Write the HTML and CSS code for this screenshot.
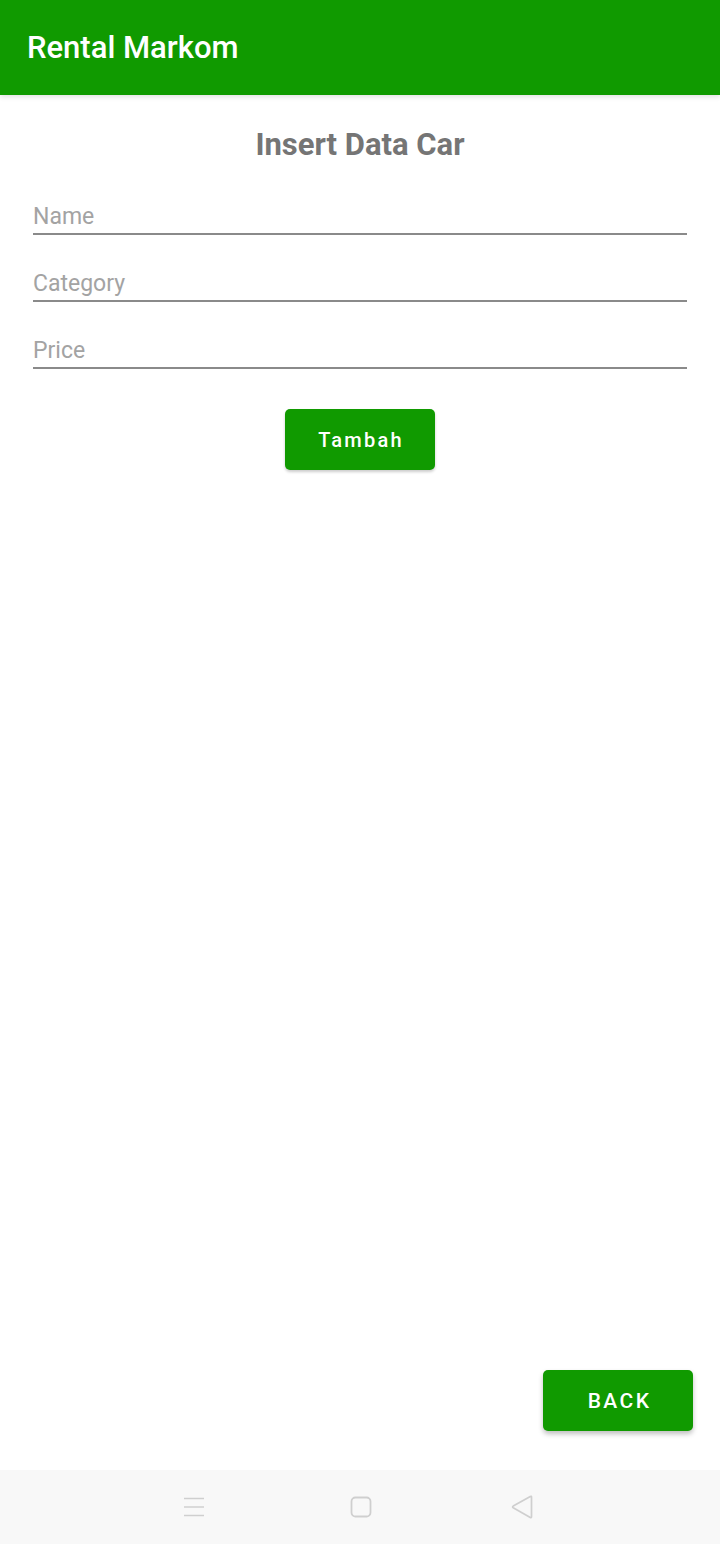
FILE: index.html
```html
<!DOCTYPE html>
<html>
<head>
<meta charset="utf-8">
<link rel="stylesheet" href="styles.css">
</head>
<body>
<div class="screen">
  <header class="appbar">
    <div class="appbar-title">Rental Markom</div>
  </header>
  <main class="content">
    <h1 class="page-title">Insert Data Car</h1>
    <form class="form">
      <div class="field"><span class="hint">Name</span></div>
      <div class="field"><span class="hint">Category</span></div>
      <div class="field"><span class="hint">Price</span></div>
      <div class="actions">
        <button type="button" class="btn btn-add">Tambah</button>
      </div>
    </form>
    <div class="bottom-actions">
      <button type="button" class="btn btn-back">BACK</button>
    </div>
  </main>
  <nav class="navbar">
    <svg class="nav-icon" width="22" height="22" viewBox="0 0 22 22">
      <path d="M1 2.5H21M1 11H21M1 19.5H21" stroke="#cfcfcf" stroke-width="1.6" fill="none"/>
    </svg>
    <svg class="nav-icon" width="22" height="22" viewBox="0 0 22 22">
      <rect x="1.5" y="1.5" width="19" height="19" rx="4" stroke="#cfcfcf" stroke-width="1.8" fill="none"/>
    </svg>
    <svg class="nav-icon" width="22" height="24" viewBox="0 0 22 24">
      <path d="M20.5 2.2 Q20.5 0.8 19.3 1.5 L2.2 11.1 Q1 11.9 2.2 12.7 L19.3 22.4 Q20.5 23.1 20.5 21.7 Z" stroke="#cfcfcf" stroke-width="1.7" fill="none" stroke-linejoin="round"/>
    </svg>
  </nav>
</div>
</body>
</html>
```

FILE: styles.css
```css
* { box-sizing: border-box; }
html, body {
  margin: 0;
  padding: 0;
  background: #ffffff;
}
body {
  font-family: Roboto, "Noto Sans", sans-serif;
}
.screen {
  width: 720px;
  height: 1544px;
  display: flex;
  flex-direction: column;
  overflow: hidden;
}
.appbar {
  height: 95px;
  flex: none;
  background: #109a00;
  display: flex;
  align-items: center;
  padding: 0 28px 0 27px;
  box-shadow: 0 2px 5px rgba(0, 0, 0, 0.12);
  position: relative;
  z-index: 1;
}
.appbar-title {
  color: #ffffff;
  font-size: 31px;
  font-weight: 500;
  line-height: 36px;
}
.content {
  flex: 1;
  display: flex;
  flex-direction: column;
  padding: 0 33px;
}
.page-title {
  margin: 32px 0 5px;
  text-align: center;
  color: #757575;
  font-size: 31px;
  font-weight: 700;
  line-height: 36px;
}
.form {
  display: flex;
  flex-direction: column;
}
.field {
  height: 67px;
  padding: 35px 0 2px;
  border-bottom: 2px solid #8a8a8a;
}
.hint {
  display: block;
  color: #a3a3a3;
  font-size: 23px;
  line-height: 28px;
}
.actions {
  display: flex;
  justify-content: center;
  margin-top: 40px;
}
.btn {
  width: 150px;
  height: 61px;
  border: none;
  border-radius: 5px;
  background: #109a00;
  color: #ffffff;
  font-family: Roboto, "Noto Sans", sans-serif;
  font-size: 20px;
  font-weight: 500;
  letter-spacing: 2.2px;
  padding: 0 0 0 2px;
  box-shadow: 0 2px 3px rgba(0, 0, 0, 0.2);
}
.bottom-actions {
  margin-top: auto;
  display: flex;
  justify-content: flex-end;
  margin-right: -6px;
  margin-bottom: 39px;
}
.btn-back {
  font-size: 21px;
  letter-spacing: 2.4px;
  padding: 0 0 0 3px;
  box-shadow: 0 3px 5px rgba(0, 0, 0, 0.25);
}
.navbar {
  height: 74px;
  flex: none;
  background: #f8f8f8;
  display: flex;
  align-items: center;
  padding-left: 183px;
}
.nav-icon:nth-child(1) { margin-right: 145px; }
.nav-icon:nth-child(2) { margin-right: 139px; }
```
